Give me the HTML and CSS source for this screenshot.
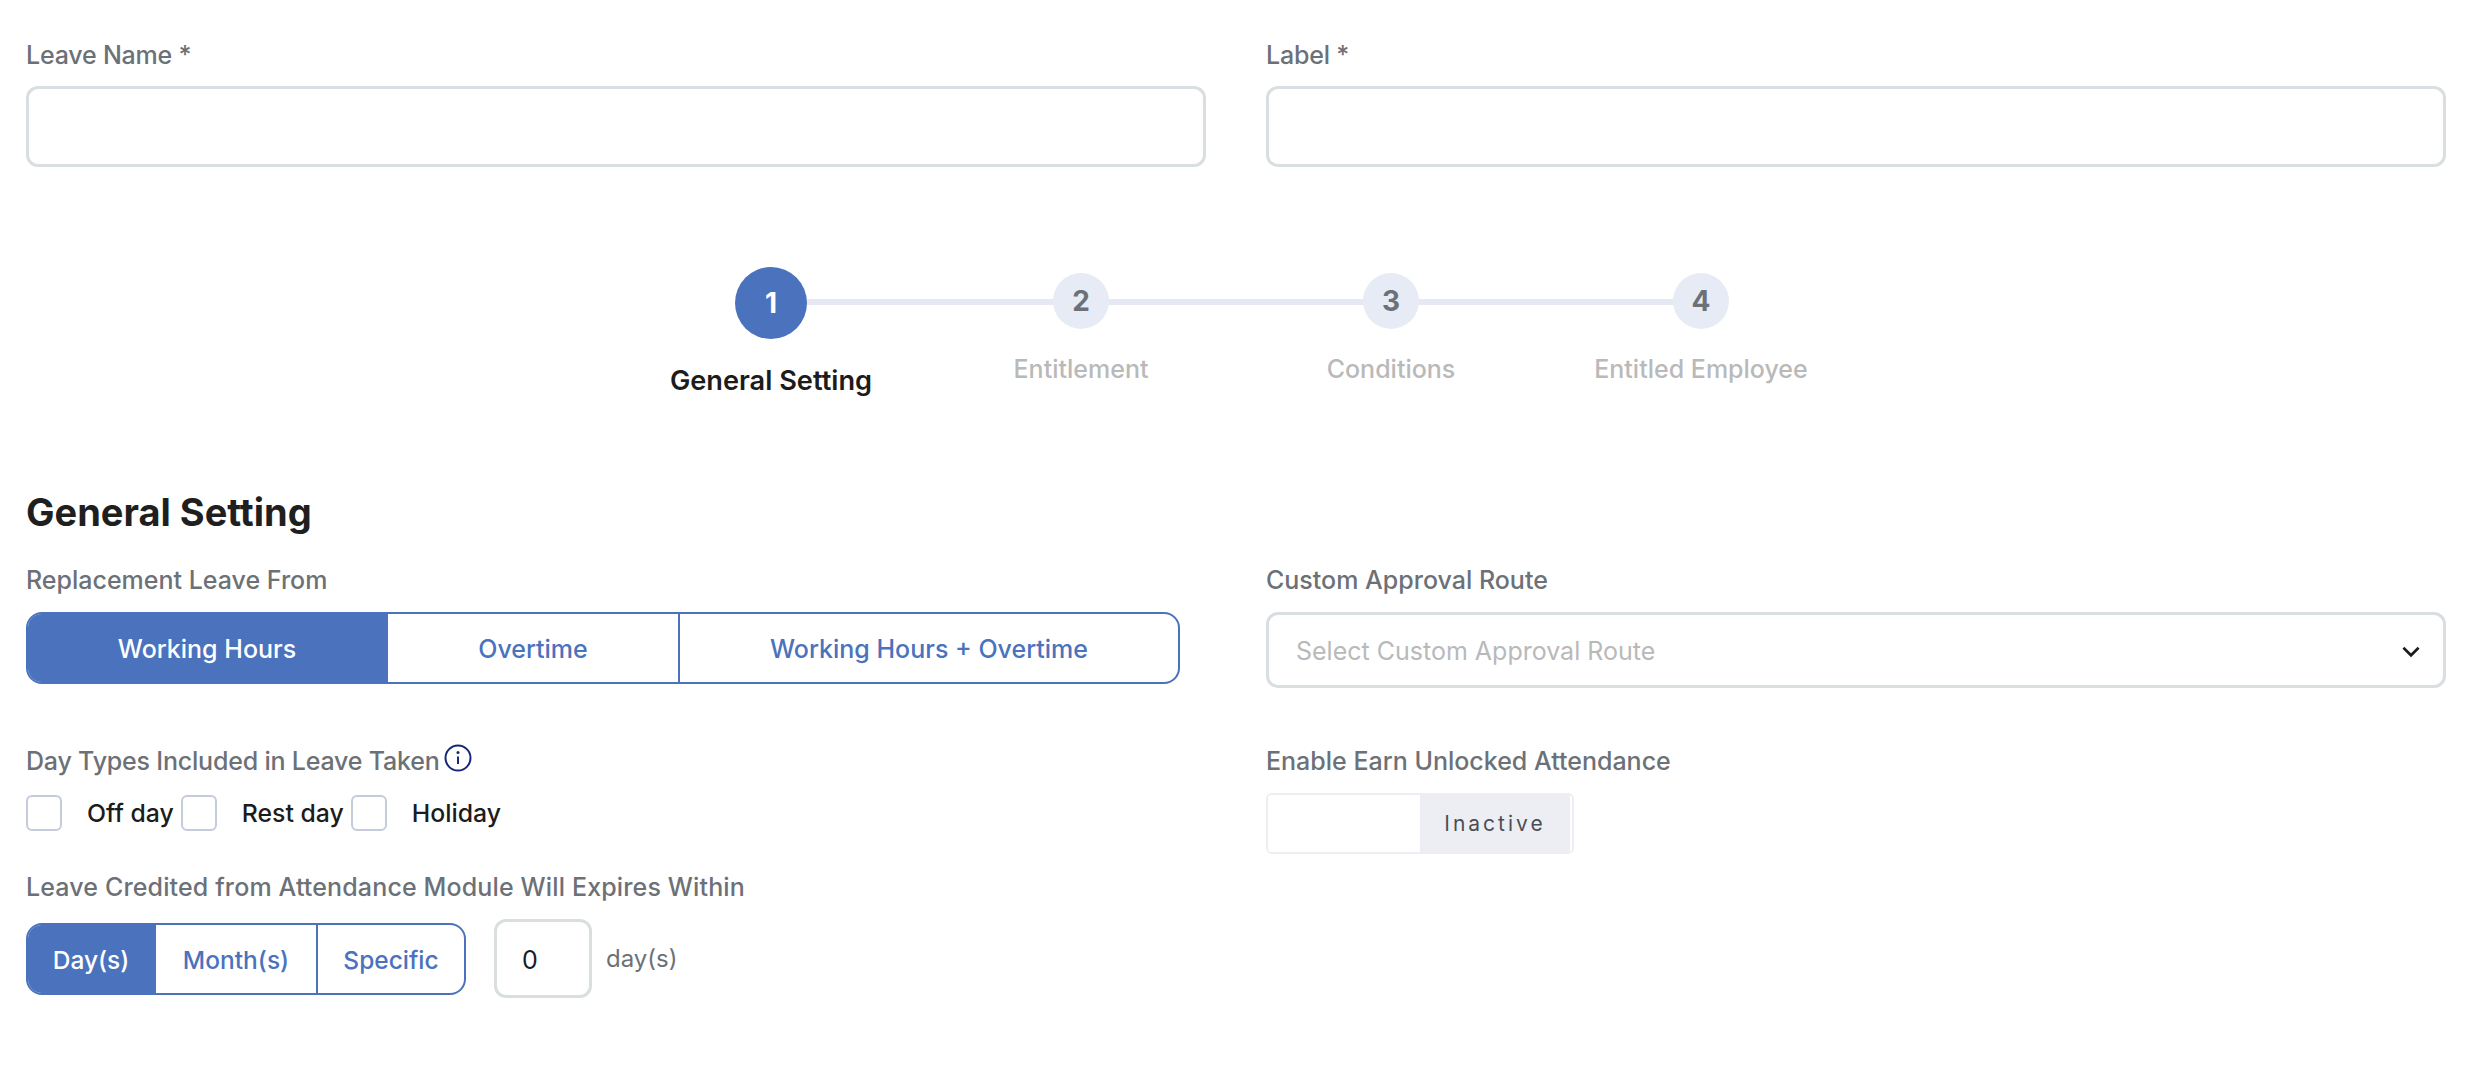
FILE: index.html
```html
<!DOCTYPE html>
<html lang="en">
<head>
<meta charset="utf-8">
<title>Leave</title>
<link rel="stylesheet" href="styles.css">
</head>
<body>
<main class="page">
  <section class="columns names">
    <div class="field"><label class="label tight">Leave Name *</label><div class="input"></div></div>
    <div class="field"><label class="label tight">Label *</label><div class="input"></div></div>
  </section>

  <ol class="stepper">
    <li class="step active"><span class="dot">1</span><span class="step-name">General Setting</span></li>
    <li class="step"><span class="dot">2</span><span class="step-name">Entitlement</span></li>
    <li class="step"><span class="dot">3</span><span class="step-name">Conditions</span></li>
    <li class="step"><span class="dot">4</span><span class="step-name">Entitled Employee</span></li>
  </ol>

  <h2 class="title">General Setting</h2>

  <section class="columns settings">
    <div class="col">
      <div class="field route-field">
        <label class="label">Replacement Leave From</label>
        <div class="seg seg-wide">
          <span class="seg-item on s1">Working Hours</span>
          <span class="seg-item s2">Overtime</span>
          <span class="seg-item s3">Working Hours + Overtime</span>
        </div>
      </div>
      <div class="field days-field">
        <label class="label label-info tight">Day Types Included in Leave Taken
          <svg class="info" viewBox="0 0 28 28" width="28" height="28" aria-hidden="true"><circle cx="14" cy="14" r="12.5" fill="none" stroke="#16267a" stroke-width="2"/><circle cx="14" cy="8.6" r="1.5" fill="#16267a"/><path d="M14 12.5V20" stroke="#16267a" stroke-width="2" fill="none"/></svg>
        </label>
        <div class="checks">
          <span class="check"><span class="box"></span><span class="check-text">Off day</span></span>
          <span class="check"><span class="box"></span><span class="check-text">Rest day</span></span>
          <span class="check"><span class="box"></span><span class="check-text">Holiday</span></span>
        </div>
      </div>
      <div class="field">
        <label class="label loose">Leave Credited from Attendance Module Will Expires Within</label>
        <div class="expire">
          <div class="seg seg-small">
            <span class="seg-item on e1">Day(s)</span>
            <span class="seg-item e2">Month(s)</span>
            <span class="seg-item e3">Specific</span>
          </div>
          <div class="num">0</div>
          <span class="unit">day(s)</span>
        </div>
      </div>
    </div>
    <div class="col">
      <div class="field route-field">
        <label class="label">Custom Approval Route</label>
        <div class="select">
          <span class="placeholder">Select Custom Approval Route</span>
          <svg class="chev" viewBox="0 0 18 12" width="20" height="13" aria-hidden="true"><path d="M2 2.5l7 7 7-7" fill="none" stroke="#1c1c1c" stroke-width="2.4"/></svg>
        </div>
      </div>
      <div class="field">
        <label class="label">Enable Earn Unlocked Attendance</label>
        <div class="toggle"><span class="toggle-off"></span><span class="toggle-state">Inactive</span></div>
      </div>
    </div>
  </section>
</main>
</body>
</html>
```
FILE: styles.css
```css
* { box-sizing: border-box; }
html, body { margin: 0; padding: 0; background: #fff; }
body { font-family: "Inter", "Liberation Sans", sans-serif; font-size: 25px; color: #1c1c1c; }
.page { padding: 39px 30px 0 26px; }
.columns { display: grid; grid-template-columns: 1180px 1180px; column-gap: 60px; }
.label { display: block; height: 32px; line-height: 32px; font-size: 25px; font-weight: 500; color: #6c7177; }
.tight { letter-spacing: -0.2px; }
.loose { letter-spacing: 0.14px; }
.input { margin-top: 15px; height: 81px; border: 3px solid #d9dee0; border-radius: 12px; background: #fff; }

.stepper { list-style: none; margin: 100px 0 0 590px; padding: 0; display: flex; }
.step { position: relative; flex: 0 0 310px; height: 120px; display: flex; flex-direction: column; align-items: center; padding-top: 6px; }
.step:not(:last-child)::after { content: ""; position: absolute; left: 155px; width: 310px; top: 32px; height: 6px; background: #e6e8f3; }
.dot { position: relative; z-index: 1; flex: none; width: 56px; height: 56px; border-radius: 50%; background: #e6ebf5; color: #6c7177; font-weight: 700; font-size: 28px; display: flex; align-items: center; justify-content: center; }
.step-name { margin-top: 24px; line-height: 32px; color: #b9b9b9; font-size: 25px; font-weight: 500; white-space: nowrap; }
.step.active { padding-top: 0; }
.step.active .dot { width: 72px; height: 72px; background: #4a72bd; color: #fff; }
.step.active .step-name { margin-top: 26px; color: #1c1c1c; font-size: 27.2px; font-weight: 600; }

.title { margin: 102px 0 0; height: 46px; line-height: 46px; font-size: 38px; font-weight: 700; color: #1f1f1f; }

.settings { margin-top: 29px; }
.col { display: flex; flex-direction: column; }
.route-field { height: 181px; }
.days-field { height: 126px; }
.seg { display: flex; margin-top: 16px; height: 72px; border: 2px solid #4a72bd; border-radius: 16px; overflow: hidden; background: #fff; }
.seg-wide { width: 1154px; }
.seg-small { width: 440px; margin-top: 0; }
.seg-item { display: flex; align-items: center; justify-content: center; padding-top: 2px; color: #4a72bd; font-size: 25px; font-weight: 500; border-left: 2px solid #4a72bd; }
.seg-item.on { background: #4a72bd; color: #fff; border-left: 0; }
.s1 { width: 358px; } .s2 { width: 292px; } .s3 { flex: 1; }
.e1 { width: 126px; } .e2 { width: 162px; } .e3 { flex: 1; }
.seg-small .seg-item { font-size: 24.5px; }

.label-info { display: flex; align-items: center; gap: 4px; }
.info { margin-top: -6px; }
.checks { display: flex; margin-top: 18px; }
.check { display: flex; align-items: center; margin-right: 7px; }
.box { width: 36px; height: 36px; border: 2px solid #c5cbdc; border-radius: 6px; background: #fff; }
.check-text { margin-left: 25px; line-height: 36px; font-size: 24.8px; color: #1c1c1c; font-weight: 500; }

.expire { display: flex; align-items: center; margin-top: 16px; height: 79px; }
.num { margin-left: 28px; width: 98px; height: 79px; border: 3px solid #d9dee0; border-radius: 12px; padding: 2px 0 0 25px; line-height: 73px; color: #1c1c1c; }
.unit { margin-left: 14px; font-size: 24px; color: #6c7177; }

.select { margin-top: 16px; width: 1180px; height: 76px; border: 3px solid #d9dee0; border-radius: 12px; display: flex; align-items: center; justify-content: space-between; padding: 2px 22px 0 27px; }
.placeholder { color: #b9b9b9; }
.toggle { margin-top: 16px; width: 308px; height: 61px; border: 2px solid #eceef3; border-radius: 6px; display: flex; overflow: hidden; }
.toggle-off { width: 152px; background: #fff; }
.toggle-state { flex: 1; background: #eceef3; border-right: 2px solid #fff; display: flex; align-items: center; justify-content: center; font-size: 21px; letter-spacing: 3px; color: #4b4f55; }
```
